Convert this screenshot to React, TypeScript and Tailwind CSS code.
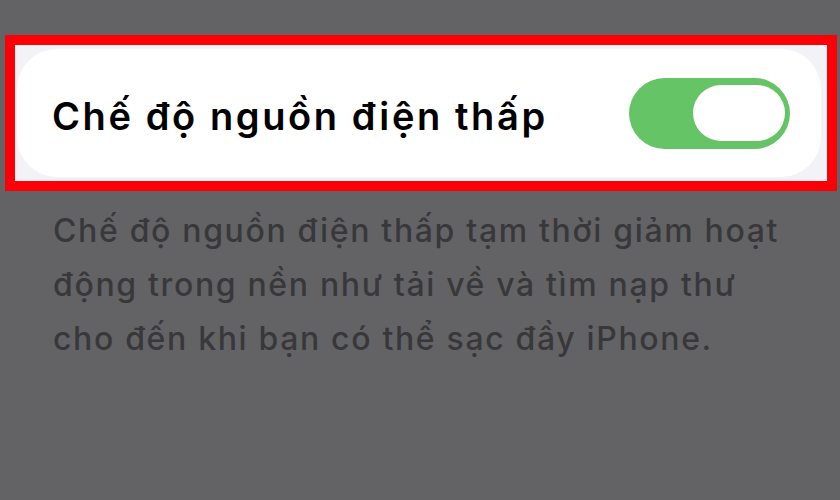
export default function App() {
  return (
    <div className="w-full h-[500px] bg-[#636366] pt-[35px] overflow-hidden" style={{ fontFamily: 'Inter, "Noto Sans", sans-serif' }}>
      <div className="ml-[5px] w-[832px] h-[156px] border-[10px] border-[#fb0007] bg-[#f2f2f7] pt-[4px] pl-[2px] pr-[6px] pb-[4px]">
        <div className="h-full bg-white rounded-[40px] flex items-center justify-between pl-[35px] pr-[31px]">
          <span className="text-[38px] font-semibold text-black tracking-[2.6px] pt-[6px]">Chế độ nguồn điện thấp</span>
          <div className="w-[161px] h-[71px] rounded-full bg-[#65c466] flex items-center justify-end pr-[5px]">
            <div className="w-[92px] h-[56px] rounded-full bg-white" />
          </div>
        </div>
      </div>
      <div className="mt-[13px] pl-[53px] text-[32px] leading-[54px] font-medium text-[#38383b] tracking-[1.65px] whitespace-nowrap">
        <div>Chế độ nguồn điện thấp tạm thời giảm hoạt</div>
        <div>động trong nền như tải về và tìm nạp thư</div>
        <div>cho đến khi bạn có thể sạc đầy iPhone.</div>
      </div>
    </div>
  )
}
